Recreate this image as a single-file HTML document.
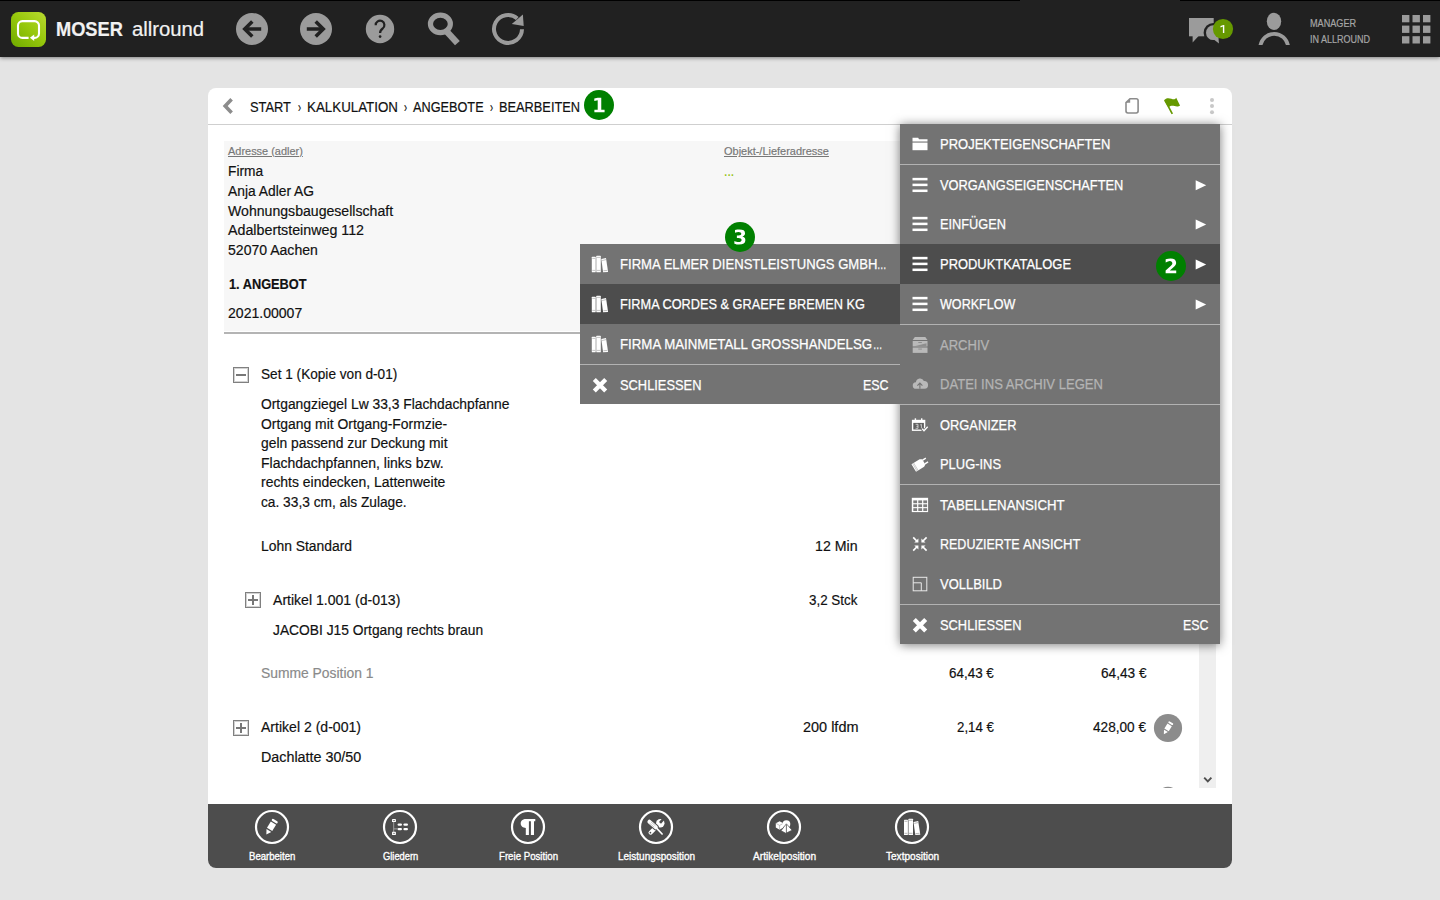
<!DOCTYPE html>
<html><head><meta charset="utf-8"><title>MOSER allround</title>
<style>
*{box-sizing:border-box;margin:0;padding:0}
html,body{width:1440px;height:900px;overflow:hidden}
body{background:#e4e4e4;font-family:"Liberation Sans",sans-serif;position:relative}
.abs{position:absolute}
.t{position:absolute;white-space:nowrap;line-height:20px;height:20px;transform-origin:0 50%;display:block}
svg{position:absolute;overflow:visible}
#top{position:absolute;left:0;top:0;width:1440px;height:57px;background:#212121;box-shadow:0 1px 4px rgba(0,0,0,.45)}
#panel{position:absolute;left:208px;top:88px;width:1024px;height:780px;background:#fff;border-radius:8px;overflow:hidden}
#hdrline{position:absolute;left:0;top:36px;width:1024px;height:1px;background:#cfcfcf}
#addr{position:absolute;left:16px;top:53px;width:992px;height:190px;background:#f7f7f7}
#addrline{position:absolute;left:16px;top:243.5px;width:992px;height:2px;background:#b4b4b4}
#tb{position:absolute;left:0;top:716px;width:1024px;height:64px;background:#4d4d4d}
#sb{position:absolute;left:991px;top:500px;width:17px;height:199.5px;background:#efefef}
.menu{position:absolute;background:#737373}
#m1{left:900px;top:124px;width:320px;height:520px;box-shadow:0 1px 10px rgba(0,0,0,.52)}
#m2{left:580px;top:244px;width:320px;height:160px}
.hl{position:absolute;left:0;width:320px;height:40px;background:#4d4d4d}
.sep{position:absolute;left:0;width:320px;height:1px;background:#b2b2b2}
.badge{position:absolute;width:30px;height:30px;border-radius:15px;background:#008000}
.box{position:absolute;width:16px;height:16px;border:1px solid #808080;box-shadow:inset 0 0 0 1px #d2d2d2;background:#fff}
</style></head>
<body>
<div id="panel">
<div id="hdrline"></div>
<div id="addr"></div><div id="addrline"></div>
<div id="sb"></div>
<svg style="left:12px;top:4px" width="20" height="28" viewBox="220 92 20 28" >
<path d="M231.6 99.3L225.2 106L231.6 112.7" stroke="#8c8c8c" stroke-width="3.6" fill="none"/>
</svg><svg style="left:912px;top:4px" width="100" height="28" viewBox="1120 92 100 28" >
<path d="M1130 98.7H1136.2a1.9 1.9 0 0 1 1.9 1.9V111.1a1.9 1.9 0 0 1-1.9 1.9H1127.9a1.9 1.9 0 0 1-1.9-1.9V102.6Z" stroke="#8c8c8c" stroke-width="1.6" fill="none"/>
<path d="M1126 102.8L1130.2 98.6V102.8Z" fill="#8c8c8c"/>
<path d="M1164 100.3C1166 97.6 1169 97.9 1171.4 98.8S1175 99.4 1176.2 97.8L1180 105.4C1178.600 106.8 1176.400 106.6 1174.400 106.0S1170.600 105.500 1168.300 107.300Z" fill="#669900"/>
<path d="M1165.2 100.6L1172.3 113.8" stroke="#669900" stroke-width="1.7" fill="none"/>
<circle cx="1212" cy="100" r="2" fill="#c8c8c8"/><circle cx="1212" cy="106" r="2" fill="#c8c8c8"/><circle cx="1212" cy="112.2" r="2" fill="#c8c8c8"/>
</svg><div class="box" style="left:25px;top:279px"></div><div class="abs" style="left:28px;top:286px;width:10px;height:2px;background:#777"></div><div class="box" style="left:37px;top:504px"></div><div class="abs" style="left:40px;top:511px;width:10px;height:2px;background:#777"></div><div class="abs" style="left:44px;top:507px;width:2px;height:10px;background:#777"></div><div class="box" style="left:25px;top:632px"></div><div class="abs" style="left:28px;top:639px;width:10px;height:2px;background:#777"></div><div class="abs" style="left:32px;top:635px;width:2px;height:10px;background:#777"></div><svg style="left:942px;top:622px" width="70" height="80" viewBox="1150 710 70 80" >
<circle cx="1168" cy="728" r="14.1" fill="#8c8c8c"/>
<g transform="translate(1167.6 728.2) rotate(32) scale(0.82)" fill="#fff"><rect x="-3.3" y="-8.4" width="6.6" height="2.3" rx="1.1"/><rect x="-3.1" y="-4.8" width="6.2" height="7.2"/><path d="M-2.8 3.8H2.8L0 8.6Z"/></g>
<path d="M1162.8 788Q1168 785.500 1173.2 788Z" fill="#8c8c8c"/>
<path d="M1204.200 777.600L1207.800 781.400L1211.400 777.600" stroke="#505050" stroke-width="1.9" fill="none"/>
</svg>
<div id="tb"></div>
<svg style="left:42px;top:718px" width="700" height="42" viewBox="250 806 700 42" >
<circle cx="272" cy="827" r="16" fill="none" stroke="#fff" stroke-width="2.2"/><g transform="translate(270.9 827.3) rotate(32) scale(1.0)" fill="#fff"><rect x="-3.3" y="-8.4" width="6.6" height="2.3" rx="1.1"/><rect x="-3.1" y="-4.8" width="6.2" height="7.2"/><path d="M-2.8 3.8H2.8L0 8.6Z"/></g>
<circle cx="400" cy="827" r="16" fill="none" stroke="#fff" stroke-width="2.2"/>
<path d="M393.700 822V832M393.700 828.900H397.600" stroke="#a8a8a8" stroke-width="0.9" fill="none"/>
<rect x="392" y="819" width="3.900" height="3.100" rx="0.4" fill="#fff"/><rect x="392" y="831.800" width="3.900" height="3.100" rx="0.4" fill="#fff"/>
<rect x="392.900" y="820.100" width="2.100" height="0.800" fill="#777"/><rect x="392.900" y="832.900" width="2.100" height="0.800" fill="#777"/>
<rect x="397.600" y="823.400" width="4.400" height="2.400" rx="1.200" fill="#fff"/><rect x="403.400" y="823.400" width="4.600" height="2.400" rx="1.200" fill="#fff"/>
<rect x="397.600" y="827.900" width="4.400" height="2.400" rx="1.200" fill="#fff"/><rect x="403.400" y="827.900" width="4.600" height="2.400" rx="1.200" fill="#fff"/>
<circle cx="528" cy="827" r="16" fill="none" stroke="#fff" stroke-width="2.2"/>
<path d="M526 819C521.800 819 520.700 821.800 520.700 823.500C520.700 826 523 827.900 525.800 827.900V835H528.900V821.200H530.900V835H534V821.200H535.300V819Z" fill="#fff"/>
<circle cx="656" cy="827" r="16" fill="none" stroke="#fff" stroke-width="2.2"/>
<path d="M650.500 832.700L658.400 825" stroke="#fff" stroke-width="4" stroke-linecap="round" fill="none"/>
<circle cx="660.300" cy="823.200" r="4.200" fill="#fff"/>
<path d="M660 822.800L664 818.400" stroke="#4d4d4d" stroke-width="2.700" fill="none"/>
<circle cx="650.400" cy="832.700" r="0.850" fill="#4d4d4d"/>
<path d="M655.300 826.900L662 834" stroke="#4d4d4d" stroke-width="3.400" stroke-linecap="round" fill="none"/>
<path d="M649.400 821.700L655.800 827.300" stroke="#4d4d4d" stroke-width="6" stroke-linecap="round" fill="none"/>
<path d="M649.400 821.700L655.800 827.300" stroke="#fff" stroke-width="4" stroke-linecap="round" fill="none"/>
<path d="M655.600 827.100L662.100 834" stroke="#fff" stroke-width="1.700" stroke-linecap="round" fill="none"/>
<path d="M649.600 823.200L654.200 827.300M650.900 821.800L655.500 825.900" stroke="#8a8a8a" stroke-width="0.500" fill="none"/>
<circle cx="784" cy="827" r="16" fill="none" stroke="#fff" stroke-width="2.2"/>
<path d="M775.800 823.300L779.600 821.200L783.400 823.300V827.600L779.600 829.800L775.800 827.600Z" fill="#fff"/>
<path d="M775.800 823.300L779.600 825.400L783.400 823.300M779.600 825.400V829.800" stroke="#999" stroke-width="0.600" fill="none"/>
<circle cx="786.400" cy="824.100" r="3.900" fill="#fff"/>
<path d="M786.400 823.800L781 830.700L785.800 833.300L792.100 830.200Z" fill="#fff" stroke="#4d4d4d" stroke-width="0.700"/>
<path d="M786.400 824.400V833" stroke="#4d4d4d" stroke-width="0.800" fill="none"/>
<circle cx="912" cy="827" r="16" fill="none" stroke="#fff" stroke-width="2.2"/>
<g transform="translate(903.9 818.7)"><rect x="0.1" y="1" width="3.9" height="15.4" rx="0.5" fill="#fff"/><rect x="4.6" y="0" width="4.5" height="16.4" rx="0.5" fill="#fff"/><path d="M9.600 3.300L14.300 2.200L16.400 16.100L11.400 16.400Z" fill="#fff"/><path d="M0.600 2.600H3.500M0.600 14.600H3.500M5.100 1.600H8.600M5.100 14.600H8.600M10.400 4.700L14.400 3.800M11.700 14.900L15.700 14.600" stroke="#8a8a8a" stroke-width="0.6" fill="none"/></g>
</svg>
<div class="abs" style="left:-208px;top:-88px;width:0;height:0"><span class="t" style="left:250.20px;top:97.00px;font-size:14px;color:#111;transform:scaleX(0.9177);-webkit-text-stroke:0.18px #111;">START</span><span class="t" style="left:297.70px;top:97.00px;font-size:14px;color:#111;transform:scaleX(0.6600);-webkit-text-stroke:0.18px #111;">›</span><span class="t" style="left:306.85px;top:97.00px;font-size:14px;color:#111;transform:scaleX(0.9533);-webkit-text-stroke:0.18px #111;">KALKULATION</span><span class="t" style="left:404.00px;top:97.00px;font-size:14px;color:#111;transform:scaleX(0.6600);-webkit-text-stroke:0.18px #111;">›</span><span class="t" style="left:413.20px;top:97.00px;font-size:14px;color:#111;transform:scaleX(0.9076);-webkit-text-stroke:0.18px #111;">ANGEBOTE</span><span class="t" style="left:489.70px;top:97.00px;font-size:14px;color:#111;transform:scaleX(0.6600);-webkit-text-stroke:0.18px #111;">›</span><span class="t" style="left:498.79px;top:97.00px;font-size:14px;color:#111;transform:scaleX(0.9138);-webkit-text-stroke:0.18px #111;">BEARBEITEN</span><span class="t" style="left:228.20px;top:141.00px;font-size:11px;color:#777;transform:scaleX(0.9955);-webkit-text-stroke:0.18px #777;text-decoration:underline;">Adresse (adler)</span><span class="t" style="left:227.85px;top:161.00px;font-size:14px;color:#111;transform:scaleX(0.9818);-webkit-text-stroke:0.18px #111;">Firma</span><span class="t" style="left:228.20px;top:181.00px;font-size:14px;color:#111;transform:scaleX(0.9872);-webkit-text-stroke:0.18px #111;">Anja Adler AG</span><span class="t" style="left:228.20px;top:201.00px;font-size:14px;color:#111;transform:scaleX(1.0068);-webkit-text-stroke:0.18px #111;">Wohnungsbaugesellschaft</span><span class="t" style="left:228.20px;top:220.00px;font-size:14px;color:#111;transform:scaleX(1.0181);-webkit-text-stroke:0.18px #111;">Adalbertsteinweg 112</span><span class="t" style="left:228.40px;top:240.00px;font-size:14px;color:#111;transform:scaleX(1.0034);-webkit-text-stroke:0.18px #111;">52070 Aachen</span><span class="t" style="left:228.50px;top:274.00px;font-size:14px;color:#111;transform:scaleX(0.9119);font-weight:700;-webkit-text-stroke:0.18px #111;">1. ANGEBOT</span><span class="t" style="left:228.30px;top:303.00px;font-size:14px;color:#111;transform:scaleX(1.0035);-webkit-text-stroke:0.18px #111;">2021.00007</span><span class="t" style="left:724.20px;top:141.00px;font-size:11px;color:#777;transform:scaleX(0.9977);-webkit-text-stroke:0.18px #777;text-decoration:underline;">Objekt-/Lieferadresse</span><span class="t" style="left:723.63px;top:161.00px;font-size:14px;color:#8fbf00;transform:scaleX(0.8692);-webkit-text-stroke:0.18px #8fbf00;">...</span><span class="t" style="left:261.10px;top:364.00px;font-size:14px;color:#111;transform:scaleX(0.9731);-webkit-text-stroke:0.18px #111;">Set 1 (Kopie von d-01)</span><span class="t" style="left:261.30px;top:394.00px;font-size:14px;color:#111;transform:scaleX(0.9878);-webkit-text-stroke:0.18px #111;">Ortgangziegel Lw 33,3 Flachdachpfanne</span><span class="t" style="left:261.30px;top:414.00px;font-size:14px;color:#111;transform:scaleX(0.9930);-webkit-text-stroke:0.18px #111;">Ortgang mit Ortgang-Formzie-</span><span class="t" style="left:261.30px;top:433.00px;font-size:14px;color:#111;transform:scaleX(0.9903);-webkit-text-stroke:0.18px #111;">geln passend zur Deckung mit</span><span class="t" style="left:260.72px;top:453.00px;font-size:14px;color:#111;transform:scaleX(0.9988);-webkit-text-stroke:0.18px #111;">Flachdachpfannen, links bzw.</span><span class="t" style="left:261.30px;top:472.00px;font-size:14px;color:#111;transform:scaleX(0.9948);-webkit-text-stroke:0.18px #111;">rechts eindecken, Lattenweite</span><span class="t" style="left:261.30px;top:492.00px;font-size:14px;color:#111;transform:scaleX(0.9801);-webkit-text-stroke:0.18px #111;">ca. 33,3 cm, als Zulage.</span><span class="t" style="left:260.61px;top:536.00px;font-size:14px;color:#111;transform:scaleX(0.9915);-webkit-text-stroke:0.18px #111;">Lohn Standard</span><span class="t" style="left:815.29px;top:536.00px;font-size:14px;color:#111;transform:scaleX(1.0116);-webkit-text-stroke:0.18px #111;">12 Min</span><span class="t" style="left:273.10px;top:590.00px;font-size:14px;color:#111;transform:scaleX(1.0041);-webkit-text-stroke:0.18px #111;">Artikel 1.001 (d-013)</span><span class="t" style="left:809.00px;top:590.00px;font-size:14px;color:#111;transform:scaleX(0.9566);-webkit-text-stroke:0.18px #111;">3,2 Stck</span><span class="t" style="left:273.10px;top:620.00px;font-size:14px;color:#111;transform:scaleX(0.9853);-webkit-text-stroke:0.18px #111;">JACOBI J15 Ortgang rechts braun</span><span class="t" style="left:261.30px;top:663.00px;font-size:14px;color:#8a8a8a;transform:scaleX(0.9901);-webkit-text-stroke:0.18px #8a8a8a;">Summe Position 1</span><span class="t" style="left:948.80px;top:663.00px;font-size:14px;color:#111;transform:scaleX(0.9590);-webkit-text-stroke:0.18px #111;">64,43 €</span><span class="t" style="left:1100.60px;top:663.00px;font-size:14px;color:#111;transform:scaleX(0.9752);-webkit-text-stroke:0.18px #111;">64,43 €</span><span class="t" style="left:260.80px;top:717.00px;font-size:14px;color:#111;transform:scaleX(1.0037);-webkit-text-stroke:0.18px #111;">Artikel 2 (d-001)</span><span class="t" style="left:803.00px;top:717.00px;font-size:14px;color:#111;transform:scaleX(1.0333);-webkit-text-stroke:0.18px #111;">200 lfdm</span><span class="t" style="left:956.70px;top:717.00px;font-size:14px;color:#111;transform:scaleX(0.9479);-webkit-text-stroke:0.18px #111;">2,14 €</span><span class="t" style="left:1092.70px;top:717.00px;font-size:14px;color:#111;transform:scaleX(0.9724);-webkit-text-stroke:0.18px #111;">428,00 €</span><span class="t" style="left:260.66px;top:747.00px;font-size:14px;color:#111;transform:scaleX(1.0224);-webkit-text-stroke:0.18px #111;">Dachlatte 30/50</span><span class="t" style="left:249.20px;top:846.00px;font-size:11px;color:#fff;transform:scaleX(0.8702);-webkit-text-stroke:0.35px #fff;">Bearbeiten</span><span class="t" style="left:383.00px;top:846.00px;font-size:11px;color:#fff;transform:scaleX(0.8490);-webkit-text-stroke:0.35px #fff;">Gliedern</span><span class="t" style="left:499.00px;top:846.00px;font-size:11px;color:#fff;transform:scaleX(0.8788);-webkit-text-stroke:0.35px #fff;">Freie Position</span><span class="t" style="left:618.00px;top:846.00px;font-size:11px;color:#fff;transform:scaleX(0.9071);-webkit-text-stroke:0.35px #fff;">Leistungsposition</span><span class="t" style="left:753.00px;top:846.00px;font-size:11px;color:#fff;transform:scaleX(0.9216);-webkit-text-stroke:0.35px #fff;">Artikelposition</span><span class="t" style="left:886.00px;top:846.00px;font-size:11px;color:#fff;transform:scaleX(0.9143);-webkit-text-stroke:0.35px #fff;">Textposition</span></div>
</div>
<div id="top">
<div class="abs" style="left:0;top:0;width:1020px;height:1px;background:#000"></div>
<div class="abs" style="left:1180px;top:0;width:260px;height:1px;background:#000"></div>
<svg style="left:11px;top:12px" width="35" height="35" viewBox="11 12 35 35" >
<defs><linearGradient id="lg" x1="1" y1="0" x2="0.1" y2="1"><stop offset="0" stop-color="#b9d930"/><stop offset="0.5" stop-color="#97c80c"/><stop offset="1" stop-color="#72ac00"/></linearGradient></defs>
<rect x="11" y="12" width="35" height="35" rx="7.5" fill="url(#lg)"/>
<path d="M28.6 37.9H22.4a4.4 4.4 0 0 1-4.4-4.4V25.5a4.4 4.4 0 0 1 4.4-4.4H34.6a4.4 4.4 0 0 1 4.4 4.4v8a4.4 4.4 0 0 1-4.4 4.4H33.6" fill="none" stroke="#fff" stroke-width="2.1"/>
<path d="M29.9 37.8L34.2 34.5V41.1Z" fill="#fff"/>
</svg><svg style="left:230px;top:8px" width="310" height="42" viewBox="230 8 310 42" >
<circle cx="252" cy="29" r="16" fill="#9b9b9b"/><path d="M261.2 29H246.0" stroke="#212121" stroke-width="3.5" fill="none"/><path d="M252.3 21.4L244.7 29L252.3 36.6" stroke="#212121" stroke-width="3.5" fill="none" stroke-linejoin="miter"/>
<circle cx="316" cy="29" r="16" fill="#9b9b9b"/><path d="M306.8 29H322.0" stroke="#212121" stroke-width="3.5" fill="none"/><path d="M315.7 21.4L323.3 29L315.7 36.6" stroke="#212121" stroke-width="3.5" fill="none" stroke-linejoin="miter"/>
<circle cx="380" cy="29" r="14.2" fill="#9b9b9b"/>
<path d="M375.7 25.2a4.35 4.35 0 1 1 7 3.3q-2.7 1.9-2.6 4.5" stroke="#212121" stroke-width="2.2" fill="none"/>
<circle cx="380.1" cy="36.6" r="1.35" fill="#212121"/>
<ellipse cx="440.4" cy="23.9" rx="9.95" ry="8.7" fill="none" stroke="#9b9b9b" stroke-width="5.2"/>
<path d="M446.6 31.4L457.4 43.1" stroke="#9b9b9b" stroke-width="6.5" fill="none"/>
<path d="M522 29.3A14 14 0 1 1 517.3 18.5" stroke="#9b9b9b" stroke-width="4" fill="none"/>
<path d="M522.9 14.6L511.8 23.9L523.7 26Z" fill="#9b9b9b"/>
</svg><svg style="left:1185px;top:8px" width="250" height="42" viewBox="1185 8 250 42" >
<defs><clipPath id="uc"><rect x="1250" y="8" width="50" height="37"/></clipPath></defs>
<rect x="1189" y="18" width="24.7" height="18.3" fill="#9b9b9b"/>
<path d="M1192.6 36V42.6L1198.6 36Z" fill="#9b9b9b"/>
<circle cx="1213.4" cy="32.7" r="9.8" fill="#212121"/>
<circle cx="1213.4" cy="32.7" r="7.4" fill="#9b9b9b"/>
<path d="M1213.8 39.6L1219 43.5L1218.4 37.5Z" fill="#9b9b9b"/>
<circle cx="1223" cy="29" r="10.1" fill="#669900"/>
<path d="M1220.5 26.1L1223.5 25H1224.3V33H1222.9V26.6L1220.5 27.5Z" fill="#fff"/>
<ellipse cx="1274" cy="21.3" rx="7.2" ry="8.6" fill="#9b9b9b"/>
<path d="M1260.3 46C1261.6 38.6 1267.3 33.8 1274.2 33.8S1286.8 38.6 1288.1 46" stroke="#9b9b9b" stroke-width="3.8" fill="none" clip-path="url(#uc)"/>
<rect x="1402.0" y="15.0" width="7.4" height="7.3" fill="#9b9b9b"/><rect x="1402.0" y="25.6" width="7.4" height="7.3" fill="#9b9b9b"/><rect x="1402.0" y="36.2" width="7.4" height="7.3" fill="#9b9b9b"/><rect x="1412.5" y="15.0" width="7.4" height="7.3" fill="#9b9b9b"/><rect x="1412.5" y="25.6" width="7.4" height="7.3" fill="#9b9b9b"/><rect x="1412.5" y="36.2" width="7.4" height="7.3" fill="#9b9b9b"/><rect x="1423.0" y="15.0" width="7.4" height="7.3" fill="#9b9b9b"/><rect x="1423.0" y="25.6" width="7.4" height="7.3" fill="#9b9b9b"/><rect x="1423.0" y="36.2" width="7.4" height="7.3" fill="#9b9b9b"/></svg>
<span class="t" style="left:55.69px;top:19.00px;font-size:20px;color:#f2f2f2;transform:scaleX(0.9109);font-weight:700;-webkit-text-stroke:0.2px #f2f2f2;">MOSER</span><span class="t" style="left:132.00px;top:19.00px;font-size:20px;color:#f2f2f2;transform:scaleX(1.0137);-webkit-text-stroke:0.2px #f2f2f2;">allround</span><span class="t" style="left:1310.00px;top:13.00px;font-size:11px;color:#a6a6a6;transform:scaleX(0.8298);-webkit-text-stroke:0.2px #a6a6a6;">MANAGER</span><span class="t" style="left:1309.71px;top:29.00px;font-size:11px;color:#a6a6a6;transform:scaleX(0.8193);-webkit-text-stroke:0.2px #a6a6a6;">IN ALLROUND</span>
</div>
<div id="m1" class="menu">
<div class="hl" style="top:120px"></div>
<div class="sep" style="top:40px"></div>
<div class="sep" style="top:200px"></div>
<div class="sep" style="top:280px"></div>
<div class="sep" style="top:360px"></div>
<div class="sep" style="top:480px"></div>
<svg style="left:8px;top:6px" width="24" height="510" viewBox="908 130 24 510" >
<path d="M912.500 137.800H918.200L919 139.300H927.500V141.500H912.500Z" fill="#fff"/>
<rect x="912.500" y="142.600" width="15" height="7.600" fill="#fff"/>
<rect x="912.5" y="177.85" width="15" height="2.5" fill="#fff"/><rect x="912.5" y="183.65" width="15" height="2.5" fill="#fff"/><rect x="912.5" y="189.55" width="15" height="2.5" fill="#fff"/><rect x="912.5" y="216.85" width="15" height="2.5" fill="#fff"/><rect x="912.5" y="222.65" width="15" height="2.5" fill="#fff"/><rect x="912.5" y="228.55" width="15" height="2.5" fill="#fff"/><rect x="912.5" y="256.85" width="15" height="2.5" fill="#fff"/><rect x="912.5" y="262.65" width="15" height="2.5" fill="#fff"/><rect x="912.5" y="268.55" width="15" height="2.5" fill="#fff"/><rect x="912.5" y="296.85" width="15" height="2.5" fill="#fff"/><rect x="912.5" y="302.65" width="15" height="2.5" fill="#fff"/><rect x="912.5" y="308.55" width="15" height="2.5" fill="#fff"/>
<path d="M914.800 337H925.300L927.500 340.100H912.700Z" fill="#b9b9b9"/>
<rect x="912.700" y="341" width="14.800" height="5.500" fill="#b9b9b9"/>
<rect x="912.700" y="347.500" width="14.800" height="5.400" fill="#b9b9b9"/>
<rect x="918.300" y="342" width="3.600" height="0.900" fill="#8a8a8a"/><rect x="918.300" y="348.600" width="3.600" height="0.900" fill="#8a8a8a"/>
<path d="M913.500 346.500L926.500 343.300V346.500Z" fill="#8e8e8e"/>
<path d="M916.200 388.800a3.300 3.300 0 0 1-0.300-6.600a4.200 4.200 0 0 1 8-1.200a3.900 3.900 0 0 1 0.500 7.800Z" fill="#b9b9b9"/>
<path d="M919.900 388.800V383.600M917.400 385.600L919.900 383.100L922.400 385.600" stroke="#737373" stroke-width="1.100" fill="none"/>
<rect x="911.900" y="419.800" width="13.400" height="11.100" fill="#fff"/>
<rect x="914.700" y="418.300" width="1.400" height="2.400" fill="#fff"/><rect x="921" y="418.300" width="1.400" height="2.400" fill="#fff"/>
<rect x="913.300" y="422.900" width="10.600" height="6.600" fill="#606060"/>
<path d="M915.600 424.300H918V428.300H915.600M916.400 426.300H918M920.200 425L921.400 424.300V428.500" stroke="#e0e0e0" stroke-width="0.800" fill="none"/>
<path d="M921.600 428.400L924 430.900L928.200 426.300" stroke="#737373" stroke-width="3" fill="none"/>
<path d="M922.200 428.800L924 430.700L927.700 426.800" stroke="#fff" stroke-width="1.300" fill="none"/>
<g transform="translate(920 464.200) rotate(-31)"><path d="M-7.300 -4.400H2.200L4.400 -3V3L2.200 4.400H-7.300Z" fill="#fff"/><rect x="4.400" y="-2.900" width="3.700" height="1.500" fill="#fff"/><rect x="4.400" y="1.400" width="3.700" height="1.500" fill="#fff"/><path d="M-6 -4.400V4.400M-4.800 -4.400V4.400" stroke="#9a9a9a" stroke-width="0.450"/></g>
<rect x="911.800" y="497.800" width="16.300" height="14.300" fill="#fff"/>
<rect x="913.3" y="500.4" width="3.800" height="2.800" fill="#7d7d7d"/><rect x="913.3" y="504.29999999999995" width="3.800" height="2.800" fill="#7d7d7d"/><rect x="913.3" y="508.2" width="3.800" height="2.800" fill="#7d7d7d"/><rect x="918.3" y="500.4" width="3.800" height="2.800" fill="#7d7d7d"/><rect x="918.3" y="504.29999999999995" width="3.800" height="2.800" fill="#7d7d7d"/><rect x="918.3" y="508.2" width="3.800" height="2.800" fill="#7d7d7d"/><rect x="923.3" y="500.4" width="3.800" height="2.800" fill="#7d7d7d"/><rect x="923.3" y="504.29999999999995" width="3.800" height="2.800" fill="#7d7d7d"/><rect x="923.3" y="508.2" width="3.800" height="2.800" fill="#7d7d7d"/>
<g stroke="#fff" stroke-width="1.700" fill="none">
<path d="M913.200 537.400L917.300 541.500M926.600 537.400L922.500 541.500M913.200 550.600L917.300 546.500M926.600 550.600L922.500 546.500"/></g>
<path d="M918.400 538.500V542.600H914.300ZM921.400 538.500V542.600H925.500ZM918.400 549.500V545.400H914.300ZM921.400 549.500V545.400H925.500Z" fill="#fff"/>
<rect x="913.200" y="577.300" width="13.600" height="13.500" fill="none" stroke="#e9e9e9" stroke-width="1"/>
<path d="M913.200 582.800H921.300V590.800" fill="none" stroke="#e9e9e9" stroke-width="1"/>
<path d="M914.300 619.500L925.700 630.900M925.700 619.500L914.300 630.900" stroke="#fff" stroke-width="4.300" fill="none"/>
</svg><svg style="left:290px;top:46px" width="20" height="150" viewBox="1190 170 20 150" ><path d="M1195.700 180.2L1206.200 185.2L1195.700 190.2Z" fill="#fff"/><path d="M1195.700 219.4L1206.200 224.4L1195.700 229.4Z" fill="#fff"/><path d="M1195.700 259.4L1206.200 264.4L1195.700 269.4Z" fill="#fff"/><path d="M1195.700 299.4L1206.200 304.4L1195.700 309.4Z" fill="#fff"/></svg>
<div class="abs" style="left:-900px;top:-124px;width:0;height:0"><span class="t" style="left:939.57px;top:134.00px;font-size:14px;color:#ffffff;transform:scaleX(0.9280);-webkit-text-stroke:0.25px #ffffff;">PROJEKTEIGENSCHAFTEN</span><span class="t" style="left:939.90px;top:175.00px;font-size:14px;color:#ffffff;transform:scaleX(0.9172);-webkit-text-stroke:0.25px #ffffff;">VORGANGSEIGENSCHAFTEN</span><span class="t" style="left:939.59px;top:214.00px;font-size:14px;color:#ffffff;transform:scaleX(0.9133);-webkit-text-stroke:0.25px #ffffff;">EINFÜGEN</span><span class="t" style="left:939.58px;top:254.00px;font-size:14px;color:#ffffff;transform:scaleX(0.9238);-webkit-text-stroke:0.25px #ffffff;">PRODUKTKATALOGE</span><span class="t" style="left:939.90px;top:294.00px;font-size:14px;color:#ffffff;transform:scaleX(0.8976);-webkit-text-stroke:0.25px #ffffff;">WORKFLOW</span><span class="t" style="left:939.80px;top:335.00px;font-size:14px;color:#b4b4b4;transform:scaleX(0.9298);-webkit-text-stroke:0.25px #b4b4b4;">ARCHIV</span><span class="t" style="left:939.57px;top:374.00px;font-size:14px;color:#b4b4b4;transform:scaleX(0.9323);-webkit-text-stroke:0.25px #b4b4b4;">DATEI INS ARCHIV LEGEN</span><span class="t" style="left:939.80px;top:415.00px;font-size:14px;color:#ffffff;transform:scaleX(0.9188);-webkit-text-stroke:0.25px #ffffff;">ORGANIZER</span><span class="t" style="left:939.58px;top:454.00px;font-size:14px;color:#ffffff;transform:scaleX(0.9233);-webkit-text-stroke:0.25px #ffffff;">PLUG-INS</span><span class="t" style="left:939.80px;top:495.00px;font-size:14px;color:#ffffff;transform:scaleX(0.9446);-webkit-text-stroke:0.25px #ffffff;">TABELLENANSICHT</span><span class="t" style="left:939.61px;top:534.00px;font-size:14px;color:#ffffff;transform:scaleX(0.8924);-webkit-text-stroke:0.25px #ffffff;">REDUZIERTE</span><span class="t" style="left:939.90px;top:574.00px;font-size:14px;color:#ffffff;transform:scaleX(0.9257);-webkit-text-stroke:0.25px #ffffff;">VOLLBILD</span><span class="t" style="left:940.01px;top:615.00px;font-size:14px;color:#ffffff;transform:scaleX(0.9178);-webkit-text-stroke:0.25px #ffffff;">SCHLIESSEN</span><span class="t" style="left:1182.86px;top:615.00px;font-size:14px;color:#ffffff;transform:scaleX(0.8838);-webkit-text-stroke:0.25px #ffffff;">ESC</span><span class="t" style="left:1022.90px;top:534.00px;font-size:14px;color:#ffffff;transform:scaleX(0.9338);-webkit-text-stroke:0.25px #ffffff;">ANSICHT</span></div>
</div>
<div id="m2" class="menu">
<div class="hl" style="top:40px"></div>
<div class="sep" style="top:120px"></div>
<svg style="left:8px;top:6px" width="24" height="150" viewBox="588 250 24 150" >
<g transform="translate(591.7 255.8)"><rect x="0.1" y="1" width="3.9" height="15.4" rx="0.5" fill="#fff"/><rect x="4.6" y="0" width="4.5" height="16.4" rx="0.5" fill="#fff"/><path d="M9.600 3.300L14.300 2.200L16.400 16.100L11.400 16.400Z" fill="#fff"/><path d="M0.600 2.600H3.500M0.600 14.600H3.500M5.100 1.600H8.600M5.100 14.600H8.600M10.400 4.700L14.400 3.800M11.700 14.900L15.700 14.600" stroke="#9a9a9a" stroke-width="0.6" fill="none"/></g><g transform="translate(591.7 295.8)"><rect x="0.1" y="1" width="3.9" height="15.4" rx="0.5" fill="#fff"/><rect x="4.6" y="0" width="4.5" height="16.4" rx="0.5" fill="#fff"/><path d="M9.600 3.300L14.300 2.200L16.400 16.100L11.400 16.400Z" fill="#fff"/><path d="M0.600 2.600H3.500M0.600 14.600H3.500M5.100 1.600H8.600M5.100 14.600H8.600M10.400 4.700L14.400 3.800M11.700 14.900L15.700 14.600" stroke="#9a9a9a" stroke-width="0.6" fill="none"/></g><g transform="translate(591.7 335.8)"><rect x="0.1" y="1" width="3.9" height="15.4" rx="0.5" fill="#fff"/><rect x="4.6" y="0" width="4.5" height="16.4" rx="0.5" fill="#fff"/><path d="M9.600 3.300L14.300 2.200L16.400 16.100L11.400 16.400Z" fill="#fff"/><path d="M0.600 2.600H3.500M0.600 14.600H3.500M5.100 1.600H8.600M5.100 14.600H8.600M10.400 4.700L14.400 3.800M11.700 14.900L15.700 14.600" stroke="#9a9a9a" stroke-width="0.6" fill="none"/></g>
<path d="M594.300 379.500L605.700 390.900M605.700 379.500L594.300 390.900" stroke="#fff" stroke-width="4.300" fill="none"/>
</svg>
<div class="abs" style="left:-580px;top:-244px;width:0;height:0"><span class="t" style="left:619.57px;top:254.00px;font-size:14px;color:#ffffff;transform:scaleX(0.9349);-webkit-text-stroke:0.25px #ffffff;">FIRMA ELMER DIENSTLEISTUNGS GMBH</span><span class="t" style="left:619.59px;top:294.00px;font-size:14px;color:#ffffff;transform:scaleX(0.9100);-webkit-text-stroke:0.25px #ffffff;">FIRMA CORDES &amp; GRAEFE BREMEN KG</span><span class="t" style="left:619.55px;top:334.00px;font-size:14px;color:#ffffff;transform:scaleX(0.9474);-webkit-text-stroke:0.25px #ffffff;">FIRMA MAINMETALL GROSSHANDELSG</span><span class="t" style="left:620.01px;top:375.00px;font-size:14px;color:#ffffff;transform:scaleX(0.9178);-webkit-text-stroke:0.25px #ffffff;">SCHLIESSEN</span><span class="t" style="left:862.51px;top:375.00px;font-size:14px;color:#ffffff;transform:scaleX(0.8889);-webkit-text-stroke:0.25px #ffffff;">ESC</span><span class="t" style="left:877.43px;top:254.00px;font-size:14px;color:#ffffff;transform:scaleX(0.6750);-webkit-text-stroke:0.25px #ffffff;">…</span><span class="t" style="left:872.63px;top:334.00px;font-size:14px;color:#ffffff;transform:scaleX(0.6667);-webkit-text-stroke:0.25px #ffffff;">…</span></div>
</div>
<svg style="left:584px;top:89.8px" width="30" height="30" viewBox="584 89.8 30 30" ><circle cx="599" cy="104.8" r="15" fill="#008000"/><path transform="translate(592.04 112.09) scale(0.00977 -0.00977)" d="M240 266H580V1231L231 1159V1421L578 1493H944V266H1284V0H240Z" fill="#fff"/></svg><svg style="left:1156px;top:250.8px" width="30" height="30" viewBox="1156 250.8 30 30" ><circle cx="1171" cy="265.8" r="15" fill="#008000"/><path transform="translate(1164.04 273.09) scale(0.00977 -0.00977)" d="M590 283H1247V0H162V283L707 764Q780 830 815.0 893.0Q850 956 850 1024Q850 1129 779.5 1193.0Q709 1257 592 1257Q502 1257 395.0 1218.5Q288 1180 166 1104V1432Q296 1475 423.0 1497.5Q550 1520 672 1520Q940 1520 1088.5 1402.0Q1237 1284 1237 1073Q1237 951 1174.0 845.5Q1111 740 909 563Z" fill="#fff"/></svg><svg style="left:725px;top:221.8px" width="30" height="30" viewBox="725 221.8 30 30" ><circle cx="740" cy="236.8" r="15" fill="#008000"/><path transform="translate(733.04 244.09) scale(0.00977 -0.00977)" d="M954 805Q1105 766 1183.5 669.5Q1262 573 1262 424Q1262 202 1092.0 86.5Q922 -29 596 -29Q481 -29 365.5 -10.5Q250 8 137 45V342Q245 288 351.5 260.5Q458 233 561 233Q714 233 795.5 286.0Q877 339 877 438Q877 540 793.5 592.5Q710 645 547 645H393V893H555Q700 893 771.0 938.5Q842 984 842 1077Q842 1163 773.0 1210.0Q704 1257 578 1257Q485 1257 390.0 1236.0Q295 1215 201 1174V1456Q315 1488 427.0 1504.0Q539 1520 647 1520Q938 1520 1082.5 1424.5Q1227 1329 1227 1137Q1227 1006 1158.0 922.5Q1089 839 954 805Z" fill="#fff"/></svg>
</body></html>
